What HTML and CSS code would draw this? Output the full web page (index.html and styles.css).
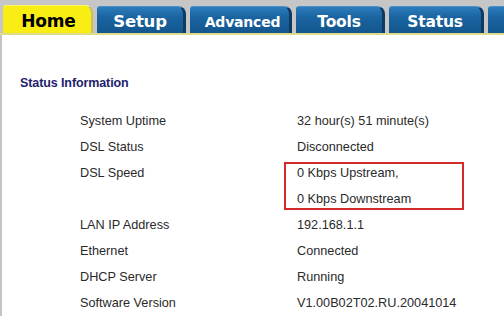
FILE: index.html
```html
<!DOCTYPE html>
<html>
<head>
<meta charset="utf-8">
<link rel="stylesheet" href="styles.css">
</head>
<body>
<div class="tabbar">
  <div class="tab tab-home active">Home</div>
  <div class="tab tab-setup">Setup</div>
  <div class="tab tab-adv">Advanced</div>
  <div class="tab tab-tools">Tools</div>
  <div class="tab tab-status">Status</div>
  <div class="tab tab-more"></div>
</div>
<div class="content">
  <div class="heading">Status Information</div>
  <div class="grid">
    <div class="label">System Uptime</div><div class="value">32 hour(s) 51 minute(s)</div>
    <div class="label">DSL Status</div><div class="value">Disconnected</div>
    <div class="label">DSL Speed</div>
    <div class="value speed">
      <div class="line">0 Kbps Upstream,</div>
      <div class="line">0 Kbps Downstream</div>
    </div>
    <div class="label">LAN IP Address</div><div class="value">192.168.1.1</div>
    <div class="label">Ethernet</div><div class="value">Connected</div>
    <div class="label">DHCP Server</div><div class="value">Running</div>
    <div class="label">Software Version</div><div class="value">V1.00B02T02.RU.20041014</div>
  </div>
</div>
</body>
</html>
```
FILE: styles.css
```css
html, body {
  margin: 0;
  padding: 0;
  background: #ffffff;
  width: 504px;
  height: 316px;
  overflow: hidden;
}
.tabbar {
  display: flex;
  align-items: flex-end;
  gap: 4px;
  height: 33px;
  padding-left: 3px;
  background: #c6c6c6;
  border-bottom: 2px solid #dcdc8c;
  box-sizing: content-box;
}
.tab {
  flex: none;
  height: 27px;
  box-sizing: border-box;
  display: flex;
  align-items: center;
  justify-content: center;
  padding-top: 3px;
  font-family: "DejaVu Sans", sans-serif;
  font-weight: bold;
  color: #ffffff;
  background: linear-gradient(#2c7cbc, #1a64a0 40%, #13568e);
  border-radius: 3px 8px 0 0;
  border-right: 3px solid #0c3a62;
  border-top: 1px solid #4a90c8;
  letter-spacing: -0.2px;
}
.tab.active {
  background: #f8ee14;
  color: #000000;
  border-right: 2px solid #c8c060;
  border-top: 1px solid #fff760;
  height: 28px;
  font-size: 17px;
}
.tab-home { width: 90px; padding-left: 3px; }
.tab-setup { width: 89px; font-size: 16.5px; }
.tab-adv { width: 102px; font-size: 14px; padding-left: 6px; }
.tab-tools { width: 89px; font-size: 15.5px; }
.tab-status { width: 95px; font-size: 15.5px; }
.tab-more { width: 30px; }
.content {
  border-left: 2px solid #c4c4c4;
  height: 281px;
  box-sizing: border-box;
  padding-top: 40px;
  font-family: "Liberation Sans", Arial, sans-serif;
}
.heading {
  margin-left: 18px;
  font-size: 12.5px;
  line-height: 16px;
  font-weight: bold;
  color: #1e1e6e;
  letter-spacing: -0.1px;
}
.grid {
  margin-top: 17px;
  padding-left: 78px;
  display: grid;
  grid-template-columns: 217px 1fr;
  font-size: 12.7px;
  line-height: 26px;
  color: #2a2a2a;
}
.speed {
  position: relative;
}
.speed::after {
  content: "";
  position: absolute;
  left: -13px;
  top: 2px;
  width: 180px;
  height: 48px;
  box-sizing: border-box;
  border: 2px solid #d42a2a;
}
```
